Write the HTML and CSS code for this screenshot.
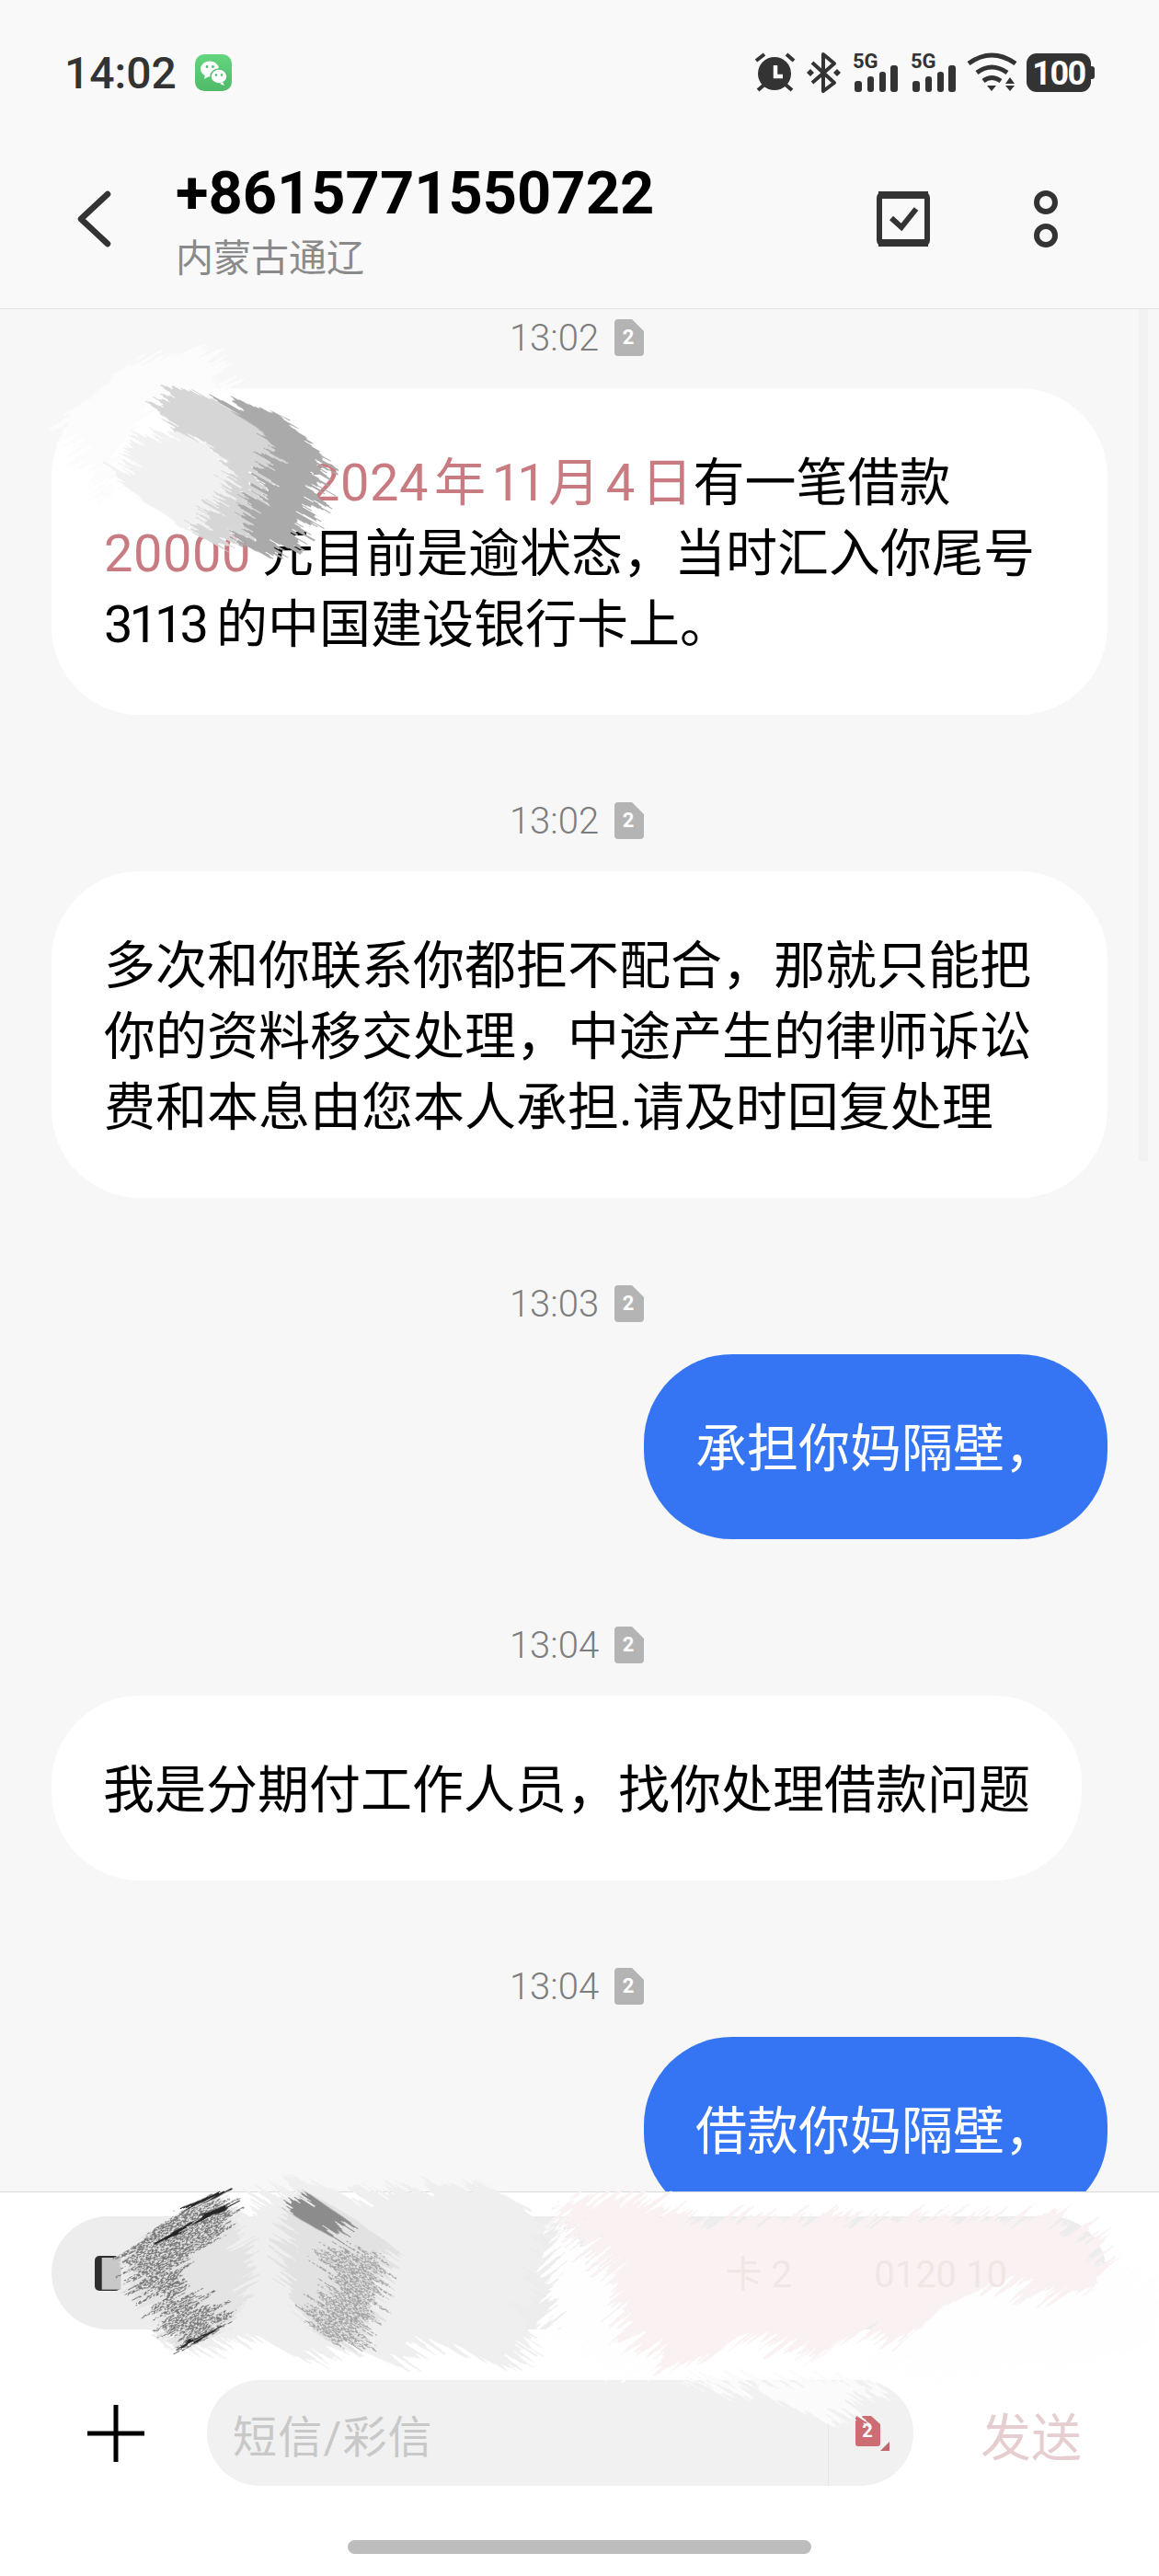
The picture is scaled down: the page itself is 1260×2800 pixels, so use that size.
FILE: index.html
```html
<!DOCTYPE html>
<html lang="zh-CN">
<head>
    <meta charset="UTF-8">
    <meta name="viewport" content="width=device-width, initial-scale=1.0">
    <title>+8615771550722</title>
    <link rel="stylesheet" href="styles.css">
</head>
<body>
    <svg class="filter-defs" aria-hidden="true">
        <defs>
            <filter id="brush" filterUnits="userSpaceOnUse" x="-800" y="-800" width="3200" height="2400" color-interpolation-filters="sRGB">
                <feTurbulence type="fractalNoise" baseFrequency="0.005 0.09" numOctaves="3" seed="4"/>
                <feColorMatrix type="matrix" values="2.4 0 0 0 -0.7  0 0 0 0 0.5  0 0 0 0 0  0 0 0 0 1" result="n"/>
                <feDisplacementMap in="SourceGraphic" in2="n" scale="110" xChannelSelector="R" yChannelSelector="G"/>
            </filter>
            <filter id="brush-speckle" filterUnits="userSpaceOnUse" x="-800" y="-800" width="3200" height="2400" color-interpolation-filters="sRGB">
                <feTurbulence type="fractalNoise" baseFrequency="0.005 0.09" numOctaves="3" seed="9"/>
                <feColorMatrix type="matrix" values="2.4 0 0 0 -0.7  0 0 0 0 0.5  0 0 0 0 0  0 0 0 0 1" result="n"/>
                <feDisplacementMap in="SourceGraphic" in2="n" scale="110" xChannelSelector="R" yChannelSelector="G" result="shape"/>
                <feTurbulence type="fractalNoise" baseFrequency="0.12 0.4" numOctaves="2" seed="11"/>
                <feColorMatrix type="matrix" values="0 0 0 0 0  0 0 0 0 0  0 0 0 0 0  0 0 0 9 -3.9"/>
                <feComposite in="shape" operator="in"/>
            </filter>
        </defs>
    </svg>

    <div class="phone">
        <header class="top">
            <div class="status-bar">
                <span class="clock">14:02</span>
                <svg class="wechat" viewBox="0 0 40 40">
                    <defs>
                        <linearGradient id="wechatGreen" x1="0" y1="0" x2="0" y2="1">
                            <stop offset="0" stop-color="#63d57f"/>
                            <stop offset="1" stop-color="#4fba69"/>
                        </linearGradient>
                    </defs>
                    <rect width="40" height="40" rx="10" fill="url(#wechatGreen)"/>
                    <ellipse cx="16" cy="16" rx="10" ry="8.5" fill="#fff"/>
                    <path d="M11 22l-1 5 5-3z" fill="#fff"/>
                    <ellipse cx="26" cy="24" rx="9" ry="8" fill="#fff" stroke="#56c070" stroke-width="1.5"/>
                    <path d="M30 30l2 4-5-2z" fill="#fff"/>
                    <circle cx="13" cy="13.5" r="1.4" fill="#4fba69"/>
                    <circle cx="19.5" cy="13.5" r="1.4" fill="#4fba69"/>
                    <circle cx="23" cy="22.5" r="1.3" fill="#4fba69"/>
                    <circle cx="29" cy="22.5" r="1.3" fill="#4fba69"/>
                </svg>
                <svg class="status-icons" viewBox="820 40 372 78">
                    <!-- alarm -->
                    <circle cx="842" cy="80" r="18" fill="#333"/>
                    <path d="M822 66l9-7M855 59l8 7M824 98l7-6M854 92l7 6" stroke="#333" stroke-width="4" fill="none"/>
                    <path d="M843 71v12h8" stroke="#fff" stroke-width="4.5" fill="none"/>
                    <!-- bluetooth -->
                    <path d="M883 68l24 22-12 9V59l12 10-24 21" stroke="#333" stroke-width="4" fill="none" stroke-linejoin="round"/>
                    <path d="M881 75l4 4-4 4-4-4zM910 75l4 4-4 4-4-4z" fill="#333"/>
                    <!-- sim 1 -->
                    <text class="net" x="927" y="74">5G</text>
                    <rect x="929" y="88" width="8" height="12" rx="3" fill="#333"/>
                    <rect x="943" y="83" width="7" height="17" rx="3" fill="#333"/>
                    <rect x="956" y="78" width="7" height="22" rx="3" fill="#333"/>
                    <rect x="968" y="71" width="8" height="29" rx="3" fill="#333"/>
                    <!-- sim 2 -->
                    <text class="net" x="990" y="74">5G</text>
                    <rect x="992" y="88" width="8" height="12" rx="3" fill="#333"/>
                    <rect x="1006" y="83" width="7" height="17" rx="3" fill="#333"/>
                    <rect x="1019" y="78" width="7" height="22" rx="3" fill="#333"/>
                    <rect x="1031" y="71" width="8" height="29" rx="3" fill="#333"/>
                    <!-- wifi -->
                    <path d="M1053 69q25-18 51 0M1062 79q16-12 33 0M1069 88q9-7 19 0" stroke="#333" stroke-width="5" fill="none"/>
                    <path d="M1073 93h10l-5 6zM1093 91h10l-5-7zM1093 93h10l-5 6z" fill="#333"/>
                    <!-- battery -->
                    <rect x="1116" y="58" width="70" height="42" rx="11" fill="#333"/>
                    <path d="M1186 72h1a3 3 0 0 1 3 3v8a3 3 0 0 1-3 3h-1z" fill="#333"/>
                    <text class="batt" x="1151" y="92">100</text>
                </svg>
            </div>
            <div class="app-bar">
                <svg class="back" viewBox="80 206 44 64">
                    <path d="M117 211l-29 27 29 27" stroke="#333" stroke-width="6.5" fill="none" stroke-linecap="round" stroke-linejoin="round"/>
                </svg>
                <div class="title-block">
                    <div class="number">+8615771550722</div>
                    <div class="region">内蒙古通辽</div>
                </div>
                <div class="actions">
                    <svg class="act-check" viewBox="948 206 70 64">
                        <rect x="956" y="211" width="52" height="54" rx="4" stroke="#333" stroke-width="6" fill="none"/>
                        <path d="M955 212h54M955 264h54" stroke="#333" stroke-width="8" fill="none"/>
                        <path d="M969 237l11 10 16-20" stroke="#333" stroke-width="6" fill="none"/>
                    </svg>
                    <svg class="act-more" viewBox="1118 206 38 64">
                        <circle cx="1137" cy="220" r="10" stroke="#333" stroke-width="6" fill="none"/>
                        <circle cx="1137" cy="256" r="10" stroke="#333" stroke-width="6" fill="none"/>
                    </svg>
                </div>
            </div>
        </header>

        <main class="thread">
            <div class="scroll-thumb"></div>

            <div class="stamp first">
                <span>13:02</span>
                <svg class="sim-tag" viewBox="0 0 32 40"><path d="M4 0h15l13 13v23a4 4 0 0 1-4 4H4a4 4 0 0 1-4-4V4a4 4 0 0 1 4-4z" fill="#b4b4b4"/><text x="15" y="27">2</text></svg>
            </div>
            <div class="bubble in wide"><span class="hidden-start"></span><span class="link date">2024&#8202;年&#8202;<span class="ones">11</span>&#8202;月&#8202;4&#8202;日</span>有一笔借款<br><span class="link amount">20000</span>元目前是逾状态，当时汇入你尾号<br><span class="ones card">3113</span>的中国建设银行卡上。</div>

            <div class="stamp">
                <span>13:02</span>
                <svg class="sim-tag" viewBox="0 0 32 40"><path d="M4 0h15l13 13v23a4 4 0 0 1-4 4H4a4 4 0 0 1-4-4V4a4 4 0 0 1 4-4z" fill="#b4b4b4"/><text x="15" y="27">2</text></svg>
            </div>
            <div class="bubble in wide">多次和你联系你都拒不配合，那就只能把<br>你的资料移交处理，中途产生的律师诉讼<br>费和本息由您本人承担.请及时回复处理</div>

            <div class="stamp">
                <span>13:03</span>
                <svg class="sim-tag" viewBox="0 0 32 40"><path d="M4 0h15l13 13v23a4 4 0 0 1-4 4H4a4 4 0 0 1-4-4V4a4 4 0 0 1 4-4z" fill="#b4b4b4"/><text x="15" y="27">2</text></svg>
            </div>
            <div class="bubble out">承担你妈隔壁，</div>

            <div class="stamp">
                <span>13:04</span>
                <svg class="sim-tag" viewBox="0 0 32 40"><path d="M4 0h15l13 13v23a4 4 0 0 1-4 4H4a4 4 0 0 1-4-4V4a4 4 0 0 1 4-4z" fill="#b4b4b4"/><text x="15" y="27">2</text></svg>
            </div>
            <div class="bubble in">我是分期付工作人员，找你处理借款问题</div>

            <div class="stamp">
                <span>13:04</span>
                <svg class="sim-tag" viewBox="0 0 32 40"><path d="M4 0h15l13 13v23a4 4 0 0 1-4 4H4a4 4 0 0 1-4-4V4a4 4 0 0 1 4-4z" fill="#b4b4b4"/><text x="15" y="27">2</text></svg>
            </div>
            <div class="bubble out">借款你妈隔壁，</div>
        </main>

        <footer class="composer">
            <div class="sim-pill">
                <span class="sim-chip"></span>
                <span class="sim-faint">卡 2 &nbsp; &nbsp; &nbsp; &nbsp; 0120 10</span>
            </div>
            <div class="input-row">
                <svg class="plus" viewBox="0 0 62 62">
                    <path d="M31 0v62" stroke="#000" stroke-width="5"/>
                    <path d="M0 31h62" stroke="#000" stroke-width="5"/>
                </svg>
                <div class="input">
                    <span class="placeholder">短信/彩信</span>
                    <div class="input-sim">
                        <svg class="sim-red" viewBox="0 0 38 40">
                            <path d="M3 0h14l10 9v21a3 3 0 0 1-3 3H3a3 3 0 0 1-3-3V3a3 3 0 0 1 3-3z" fill="#cc6d73"/>
                            <text x="13" y="23">2</text>
                            <path d="M37 28v10H27z" fill="#c0666c"/>
                        </svg>
                    </div>
                </div>
                <span class="send">发送</span>
            </div>
            <div class="home-bar"></div>
        </footer>

        <!-- smudges painted over the sender's name and number.
             each tier sits in a rotated group so the filter streaks follow the brush -->
        <svg class="smudge smudge-name" viewBox="0 0 960 900">
            <g transform="rotate(-30 480 450)" filter="url(#brush)"><path transform="rotate(30 480 450)" fill="#fcfcfc" d="M40 265L250 85 340 65 420 60 510 35 570 110 600 170 410 180 320 220 230 380 180 550 100 400 30 300z"/></g>
            <g transform="rotate(30 480 450)" filter="url(#brush)"><path transform="rotate(-30 480 450)" fill="#f1f1f1" d="M400 310L490 340 590 450 530 570 430 630 280 520 210 440 310 320z"/></g>
            <g transform="rotate(30 480 450)" filter="url(#brush)"><path transform="rotate(-30 480 450)" fill="#d6d6d6" d="M440 170L530 205 700 310 740 380 690 400 690 465 650 540 600 680 560 690 440 630 530 570 590 450 500 340 400 310 350 240 390 190z"/></g>
            <g transform="rotate(30 480 450)" filter="url(#brush)"><path transform="rotate(-30 480 450)" fill="#aaa" d="M550 215L640 215 760 260 890 400 880 500 850 590 810 640 720 725 610 680 640 560 700 470 680 400 740 380 690 310 590 245z"/></g>
        </svg>

        <svg class="smudge smudge-left" viewBox="0 0 1568 720" preserveAspectRatio="none">
            <g transform="rotate(35 780 360)" filter="url(#brush)"><path transform="rotate(-35 780 360)" fill="#efeff0" d="M640 40L720 10 800 10 900 60 1060 20 1300 10 1400 60 1500 165 1460 340 1420 430 1450 540 1370 620 1280 570 1150 530 1050 610 950 560 820 560 770 600 650 530 540 545 400 560 300 525 350 480 400 200z"/></g>
            <path fill="#c8c8c8" d="M142 252h58v104h-58z"/>
            <g transform="rotate(-30 400 300)" filter="url(#brush)"><path transform="rotate(30 400 300)" fill="#e4e4e4" d="M225 215L330 140 430 70 500 60 540 90 560 170 600 300 560 420 510 500 400 545 340 470 290 400 235 360 215 260z"/></g>
            <g transform="rotate(-30 400 300)" filter="url(#brush-speckle)"><path transform="rotate(30 400 300)" fill="#777" d="M225 215L330 140 430 70 500 60 540 90 500 190 400 250 370 330 430 380 500 430 510 490 400 545 340 470 290 400 235 360 215 260z"/></g>
            <g transform="rotate(35 880 300)" filter="url(#brush)"><path transform="rotate(-35 880 300)" fill="#e2e2e2" d="M770 40L920 130 1040 235 1000 320 970 400 950 490 920 535 840 530 740 460 690 300 700 150 720 70z"/></g>
            <g transform="rotate(35 880 300)" filter="url(#brush-speckle)"><path transform="rotate(-35 880 300)" fill="#a2a2a2" d="M800 220L1000 240 980 400 940 530 840 530 760 460 830 350z"/></g>
            <g transform="rotate(35 880 300)" filter="url(#brush)"><path transform="rotate(-35 880 300)" fill="#8c8c8c" d="M715 65L790 55 890 130 850 190 720 110z"/></g>
            <g transform="rotate(-30 400 300)" filter="url(#brush)"><path transform="rotate(30 400 300)" d="M375 100l115-50M430 125l100-40M350 180l60-30M410 535l50-40" stroke="#262626" stroke-width="14" fill="none"/></g>
        </svg>

        <svg class="smudge smudge-right" viewBox="0 0 1568 840" preserveAspectRatio="none">
            <g transform="rotate(-45 700 400)" filter="url(#brush)"><path transform="rotate(45 700 400)" fill="#fefefe" d="M0 130L160 300 170 500 320 620 150 620 0 500z"/></g>
            <g transform="rotate(-45 700 400)" filter="url(#brush)"><path transform="rotate(45 700 400)" fill="#fefefe" d="M900 500L1000 400 1140 340 1260 370 1400 350 1450 230 1568 330 1568 520 1300 620 1000 640 800 600z"/></g>
            <g transform="rotate(-45 700 400)" filter="url(#brush)"><path transform="rotate(45 700 400)" fill="#faf2f2" d="M20 60L230 50 400 120 1310 115 1400 170 1430 280 1400 360 1260 380 1140 340 1000 420 920 520 820 490 680 570 500 520 320 610 170 500 160 300 20 130z"/></g>
            <g transform="rotate(40 600 700)" filter="url(#brush)"><path transform="rotate(-40 600 700)" fill="#fbfbfb" d="M300 645L820 650 860 680 805 720 790 780 700 780 530 690 470 700z"/></g>
        </svg>
    </div>
</body>
</html>
```

FILE: styles.css
```css
* {
    box-sizing: border-box;
}
body {
    margin: 0;
    font-family: Roboto, "Noto Sans CJK SC", sans-serif;
    background-color: #fff;
}
.filter-defs {
    position: absolute;
    width: 0;
    height: 0;
}
.phone {
    position: relative;
    width: 1260px;
    height: 2800px;
    overflow: hidden;
    display: flex;
    flex-direction: column;
}

/* top */
.top {
    height: 336px;
    background-color: #f9f9f9;
    border-bottom: 1px solid #e2e2e2;
    flex-shrink: 0;
}
.status-bar {
    height: 158px;
    display: flex;
    align-items: center;
    padding: 0 68px 0 70px;
}
.clock {
    font-size: 48px;
    font-weight: 500;
    color: #333;
}
.wechat {
    width: 40px;
    height: 40px;
    margin-left: 20px;
}
.status-icons {
    width: 372px;
    height: 78px;
    margin-left: auto;
}
.net {
    font-size: 22px;
    font-weight: 700;
    fill: #333;
}
.batt {
    font-size: 36px;
    font-weight: 700;
    letter-spacing: -1.5px;
    fill: #fff;
    text-anchor: middle;
}
.app-bar {
    display: flex;
    align-items: flex-start;
    padding: 19px 104px 0 80px;
}
.back {
    width: 44px;
    height: 64px;
    margin-top: 29px;
}
.title-block {
    margin-left: 67px;
}
.number {
    font-size: 65px;
    line-height: 66px;
    font-weight: 700;
    color: #000;
}
.region {
    font-size: 41px;
    line-height: 50px;
    margin-top: 13px;
    color: #8a8a8a;
}
.actions {
    display: flex;
    gap: 100px;
    margin-left: auto;
    margin-top: 29px;
}
.act-check {
    width: 70px;
    height: 64px;
}
.act-more {
    width: 38px;
    height: 64px;
}

/* messages */
.thread {
    position: relative;
    height: 2046px;
    flex-shrink: 0;
    overflow: hidden;
    padding: 0 56px;
    background-color: #f7f7f7;
    display: flex;
    flex-direction: column;
}
.scroll-thumb {
    position: absolute;
    top: 0;
    left: 1238px;
    width: 10px;
    height: 926px;
    background-color: #f2f2f2;
}
.stamp {
    height: 40px;
    margin: 95px 0 35px;
    padding-right: 6px;
    flex-shrink: 0;
    display: flex;
    align-items: center;
    justify-content: center;
    gap: 17px;
    font-size: 40px;
    font-weight: 300;
    color: #7d7d7d;
}
.stamp.first {
    margin-top: 11px;
}
.sim-tag {
    width: 32px;
    height: 40px;
}
.sim-tag text {
    font-size: 22px;
    font-weight: 700;
    fill: #fff;
    text-anchor: middle;
}
.bubble {
    flex-shrink: 0;
    font-size: 56px;
    line-height: 77px;
    padding: 65px 56px 59px;
    border-radius: 96px;
    color: #000;
    background-color: #fff;
    align-self: flex-start;
}
.bubble.wide {
    align-self: stretch;
    padding-left: 57px;
}
.bubble.out {
    align-self: flex-end;
    color: #fff;
    background-color: #3574f2;
}
.link {
    color: #c87b80;
}
.date {
    letter-spacing: 0.5px;
}
.amount {
    margin-right: 12px;
    letter-spacing: 0.5px;
}
.ones {
    letter-spacing: -4px;
}
.card {
    margin-right: 12px;
}
.hidden-start {
    display: inline-block;
    width: 225px;
}

/* bottom */
.composer {
    flex: 1;
    background-color: #fff;
    border-top: 1px solid #dcdcdc;
}
.sim-pill {
    height: 123px;
    margin: 26px 57px 0 56px;
    padding: 0 108px 4px 47px;
    border-radius: 62px;
    background-color: #ededed;
    display: flex;
    align-items: center;
    justify-content: space-between;
}
.sim-chip {
    width: 28px;
    height: 38px;
    margin-top: 4px;
    border-radius: 5px;
    background-color: #2f2f2f;
}
.sim-faint {
    position: relative;
    z-index: 1;
    font-size: 40px;
    color: #f1e6e6;
}
.input-row {
    display: flex;
    align-items: center;
    height: 115px;
    margin-top: 55px;
    padding-left: 95px;
}
.plus {
    width: 62px;
    height: 62px;
    margin-right: 68px;
}
.input {
    width: 768px;
    height: 115px;
    border-radius: 58px;
    background-color: #f1f1f1;
    display: flex;
    align-items: center;
    padding-left: 28px;
}
.placeholder {
    flex: 1;
    font-size: 48px;
    letter-spacing: 1.2px;
    color: #c8c8c8;
}
.input-sim {
    width: 93px;
    height: 115px;
    border-left: 1px solid #e6e6e6;
    padding: 39px 0 0 29px;
}
.sim-red {
    display: block;
    width: 38px;
    height: 40px;
}
.sim-red text {
    font-size: 20px;
    font-weight: 700;
    fill: #fff;
    text-anchor: middle;
}
.send {
    margin-left: 73px;
    font-size: 55px;
    color: #e6cdd0;
}
.home-bar {
    width: 504px;
    height: 15px;
    margin: 59px auto 0;
    border-radius: 8px;
    background-color: #bdbdbd;
}

/* smudges */
.smudge {
    position: absolute;
    overflow: visible;
}
.smudge-name {
    left: 56px;
    top: 366px;
    width: 320px;
    height: 300px;
}
.smudge-left {
    left: 60px;
    top: 2370px;
    width: 560px;
    height: 240px;
}
.smudge-right {
    left: 600px;
    top: 2370px;
    width: 660px;
    height: 280px;
}
```
